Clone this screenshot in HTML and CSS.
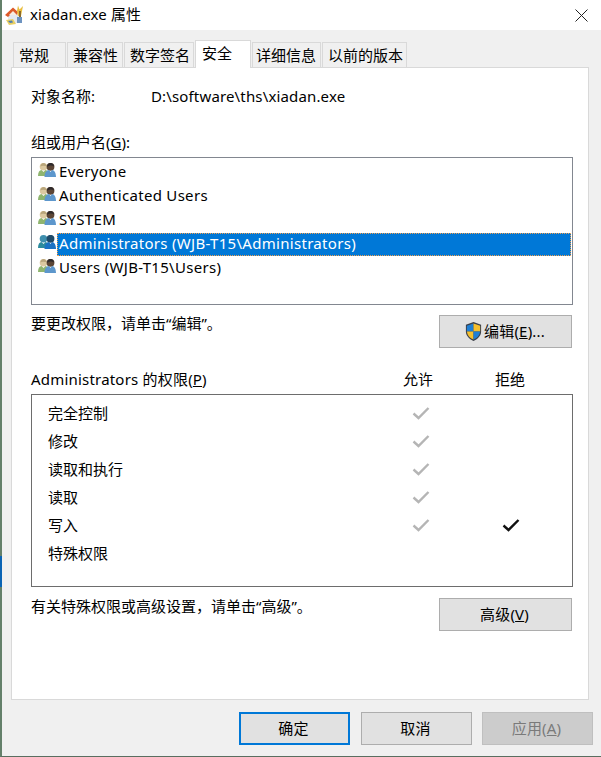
FILE: index.html
```html
<!DOCTYPE html>
<html>
<head>
<meta charset="utf-8">
<title>xiadan.exe 属性</title>
<link rel="stylesheet" href="styles.css">
</head>
<body>
<svg class="defs" width="0" height="0">
	<symbol id="users" viewBox="0 0 18 14">
		<circle cx="5.500" cy="3.800" r="3.800" fill="#dcc9a0"/>
		<path d="M2.500 3.500C2.500 1.500 4 0 5.500 0S8.500 1.500 8.500 3c-2 0-4-1-6 .5z" fill="#b9a67c"/>
		<path d="M0 13C0 9 1.500 7 3.500 7l2 2 2-2 2.500 1v5z" fill="#8fb56f"/>
		<circle cx="12.500" cy="3.800" r="3.900" fill="#5c4636"/>
		<path d="M9 4c0-2.800 1.700-4 3.500-4S16 1.200 16 3.500c-2-1.500-5-1-7 .5z" fill="#2e2a2c"/>
		<path d="M6.500 14c0-4 2-7 4.500-7l1.500 2L14 7c2.500 0 4 3 4 7z" fill="#5d97cc"/>
	</symbol>
	<symbol id="users-sel" viewBox="0 0 18 14">
		<circle cx="5.500" cy="3.800" r="3.800" fill="#3f8fae"/>
		<path d="M0 13C0 9 1.500 7 3.500 7l2 2 2-2 2.500 1v5z" fill="#2b8b9e"/>
		<circle cx="12.500" cy="3.800" r="3.900" fill="#1f4a68"/>
		<path d="M6.500 14c0-4 2-7 4.500-7l1.500 2L14 7c2.500 0 4 3 4 7z" fill="#1a72c4"/>
	</symbol>
	<symbol id="check" viewBox="0 0 18 14">
		<path d="M1.500 7.500l5 4.500L16.500 2" fill="none" stroke="currentColor" stroke-width="2.400"/>
	</symbol>
</svg>
<div class="window">
	<div class="edge-mark"></div>
	<div class="titlebar">
		<svg class="appicon" width="20" height="20" viewBox="0 0 20 20">
			<path d="M3 9h12v9H3z" fill="#e4e8ee"/>
			<path d="M0 10L8 2.500l5 4.500-1 3-7 0-2 2z" fill="#dc5a2a"/>
			<path d="M4 10l4-4 4 4z" fill="#f7ece0"/>
			<path d="M13 .5l1.500 4L18 1l-1 5-1 5h-3l-1-5z" fill="#e9bd3c"/>
			<path d="M14 6h2v6h-2z" fill="#8a6a2a"/>
			<path d="M1 15l7-1 3 5-7 1z" fill="#e8cf62"/>
			<path d="M3 16l4-.5 1 2-3 .5z" fill="#4f7fb0"/>
			<path d="M12 12h5v6h-5z" fill="#6d93c0"/>
		</svg>
		<span class="title">xiadan.exe 属性</span>
		<svg class="close" width="13" height="13" viewBox="0 0 13 13">
			<path d="M.5.500l12 12M12.500.500l-12 12" stroke="#222" stroke-width="1" fill="none"/>
		</svg>
	</div>
	<div class="tabs">
		<div class="tab t1">常规</div>
		<div class="tab t2">兼容性</div>
		<div class="tab t3">数字签名</div>
		<div class="tab active">安全</div>
		<div class="tab t5">详细信息</div>
		<div class="tab t6">以前的版本</div>
	</div>
	<div class="panel">
		<div class="objname">
			<span class="objlabel">对象名称:</span>
			<span class="path">D:\software\ths\xiadan.exe</span>
		</div>
		<div class="grouplabel">组或用户名(<u>G</u>):</div>
		<div class="userlist">
			<div class="user"><svg class="uicon"><use href="#users"/></svg><span class="uname">Everyone</span></div>
			<div class="user"><svg class="uicon"><use href="#users"/></svg><span class="uname">Authenticated Users</span></div>
			<div class="user"><svg class="uicon"><use href="#users"/></svg><span class="uname">SYSTEM</span></div>
			<div class="user selected"><svg class="uicon"><use href="#users-sel"/></svg><span class="uname">Administrators (WJB-T15\Administrators)</span></div>
			<div class="user"><svg class="uicon"><use href="#users"/></svg><span class="uname">Users (WJB-T15\Users)</span></div>
		</div>
		<div class="action first">
			<span>要更改权限，请单击“编辑”。</span>
			<button class="btn">
				<svg class="shield" width="19" height="21" viewBox="0 0 20 22">
					<path d="M10 1l8 3v7c0 5-4 8-8 10-4-2-8-5-8-10V4z" fill="#3b3f48"/>
					<path d="M10 2.500V11H3V5z" fill="#1f7fd4"/>
					<path d="M10 2.500L17 5v6h-7z" fill="#f5bf2c"/>
					<path d="M3 11h7v8.500C6 18 3.500 15 3 11z" fill="#f5bf2c"/>
					<path d="M10 11h7c-.5 4-3 7-7 8.500z" fill="#1f7fd4"/>
				</svg>编辑(<u>E</u>)...
			</button>
		</div>
		<div class="permhead">
			<span class="permname">Administrators 的权限(<u>P</u>)</span>
			<span class="permcol">允许</span>
			<span class="permcol">拒绝</span>
		</div>
		<div class="permbox">
			<div class="perm"><span>完全控制</span><svg class="mark grey"><use href="#check"/></svg><i></i></div>
			<div class="perm"><span>修改</span><svg class="mark grey"><use href="#check"/></svg><i></i></div>
			<div class="perm"><span>读取和执行</span><svg class="mark grey"><use href="#check"/></svg><i></i></div>
			<div class="perm"><span>读取</span><svg class="mark grey"><use href="#check"/></svg><i></i></div>
			<div class="perm"><span>写入</span><svg class="mark grey"><use href="#check"/></svg><svg class="mark"><use href="#check"/></svg></div>
			<div class="perm"><span>特殊权限</span><i></i><i></i></div>
		</div>
		<div class="action second">
			<span>有关特殊权限或高级设置，请单击“高级”。</span>
			<button class="btn">高级(<u>V</u>)</button>
		</div>
	</div>
	<div class="footer">
		<button class="btn small default">确定</button>
		<button class="btn small cancel">取消</button>
		<button class="btn small disabled">应用(<u>A</u>)</button>
	</div>
</div>
</body>
</html>
```

FILE: styles.css
```css
*{
	margin: 0;
	padding: 0;
	box-sizing: border-box;
}
html,body{
	height: 100%;
	overflow: hidden;
}
body{
	background-color: #f0f0f0;
	color: #000;
	font: 15px/22px "Noto Sans", "Noto Sans CJK SC", sans-serif;
}
.defs{
	position: absolute;
}
.window{
	position: relative;
	width: 601px;
	height: 757px;
	border-left: 2px solid #64806a;
	border-bottom: 1px solid #5a6e60;
	display: flex;
	flex-direction: column;
}
.edge-mark{
	position: absolute;
	left: -2px;
	top: 556px;
	width: 2px;
	height: 31px;
	background-color: #0a64b4;
}
.titlebar{
	height: 30px;
	background-color: #fff;
	display: flex;
	align-items: center;
	padding-left: 3px;
	padding-right: 13px;
}
.appicon{
	flex: none;
}
.title{
	margin-left: 5px;
	flex: 1;
	letter-spacing: .15px;
	padding-bottom: 2px;
}
.tabs{
	height: 37px;
	display: flex;
	align-items: flex-end;
	padding-left: 11px;
}
.tab{
	height: 25px;
	margin-right: 1px;
	background-color: #f0f0f0;
	border: 1px solid #d9d9d9;
	border-bottom: none;
	padding-left: 5px;
	line-height: 24px;
	white-space: nowrap;
}
.t1{ width: 53px; }
.t2{ width: 56px; }
.t3{ width: 70px; }
.t5{ width: 69px; padding-left: 3px; }
.t6{ width: 85px; }
.active{
	width: 56px;
	height: 28px;
	line-height: 24px;
	padding-left: 6px;
	background-color: #fff;
	position: relative;
	z-index: 1;
	margin-bottom: -1px;
}
.panel{
	margin-left: 9px;
	width: 578px;
	height: 633px;
	background-color: #fff;
	border: 1px solid #d9d9d9;
	padding: 17px 15px 0 19px;
}
.objname{
	display: flex;
}
.objlabel{
	width: 120px;
}
.path{
	letter-spacing: .15px;
}
.grouplabel{
	margin-top: 24px;
}
.userlist{
	margin-top: 4px;
	height: 148px;
	border: 1px solid #828790;
	padding: 2px 1px;
}
.user{
	height: 24px;
	display: flex;
	align-items: center;
	padding-left: 5px;
}
.uicon{
	width: 18px;
	height: 14px;
	margin-top: -5px;
	flex: none;
}
.uname{
	margin-left: 1px;
	padding-left: 2px;
	flex: 1;
	height: 23px;
	line-height: 21px;
	letter-spacing: .3px;
}
.selected .uname{
	background-color: #0078d7;
	color: #fff;
	outline: 1px dotted #f0a050;
	outline-offset: -1px;
}
.action{
	display: flex;
	justify-content: space-between;
	align-items: flex-start;
	line-height: 16px;
	padding-right: 1px;
}
.first{
	margin-top: 10px;
}
.second{
	margin-top: 11px;
}
.btn{
	width: 133px;
	height: 33px;
	background-color: #e1e1e1;
	border: 1px solid #adadad;
	color: #000;
	font: inherit;
	line-height: 20px;
	letter-spacing: .2px;
	padding: 0 2px 2px 0;
	display: flex;
	align-items: center;
	justify-content: center;
}
.shield{
	margin: 2px 1px 0 0;
}
.small{
	width: 111px;
}
.default{
	border: 2px solid #0078d7;
}
.cancel{
	margin-right: -1px;
}
.disabled{
	background-color: #ccc;
	border-color: #bfbfbf;
	color: #7a7a7a;
}
.permhead{
	margin-top: 20px;
	display: flex;
	padding-right: 17px;
}
.permname{
	flex: 1;
	letter-spacing: .2px;
}
.permcol{
	width: 92px;
	text-align: center;
}
.permbox{
	margin-top: 4px;
	height: 193px;
	border: 1px solid #6d6d6d;
	padding: 4px 16px 0 16px;
}
.perm{
	height: 28px;
	display: flex;
	align-items: center;
}
.perm span{
	flex: 1;
}
.perm i,.mark{
	width: 90px;
	height: 14px;
	flex: none;
}
.mark{
	color: #111;
}
.grey{
	color: #b5b5b5;
}
.footer{
	margin-top: 12px;
	display: flex;
	justify-content: flex-end;
	gap: 11px;
	padding-right: 8px;
}
```
